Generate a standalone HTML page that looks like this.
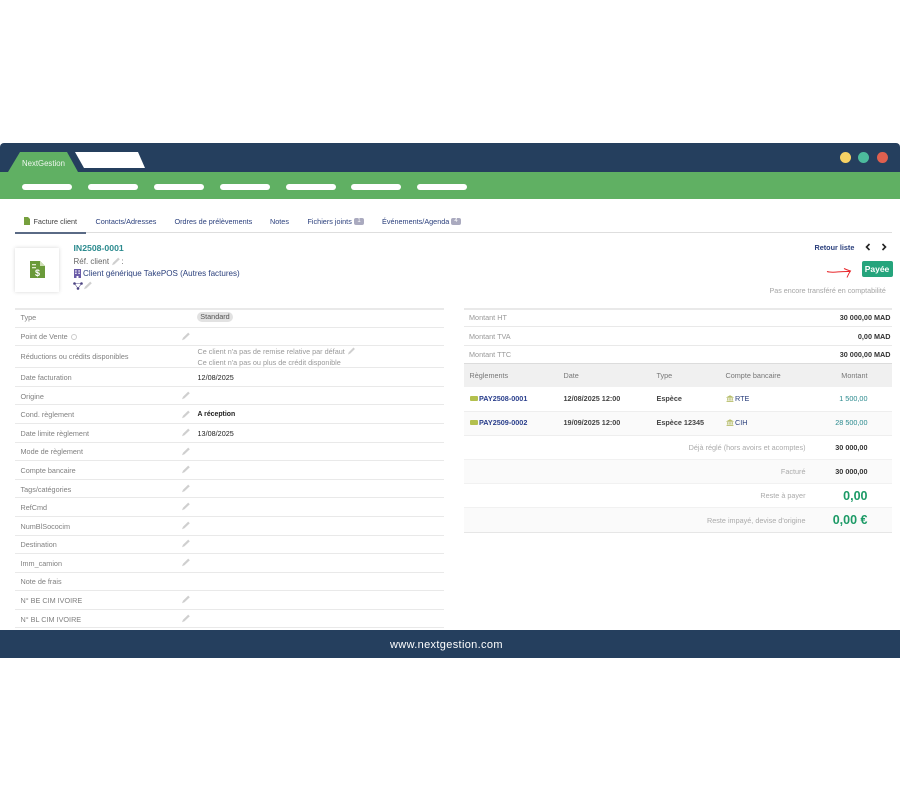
<!DOCTYPE html>
<html lang="fr"><head><meta charset="utf-8"><title>NextGestion</title>
<style>
html,body{margin:0;padding:0;background:#fff}
#p{position:relative;width:900px;height:800px;overflow:hidden;font-family:"Liberation Sans",sans-serif;font-size:7.25px;color:#333;filter:blur(.35px)}
#p div,#p span.a,#p svg{position:absolute}
.t{position:absolute;white-space:nowrap;line-height:12px;height:12px;margin-top:.8px}
.l{color:#808080;left:20.5px}
.v{left:197.5px;color:#222}
.b{font-weight:bold}
.r{text-align:right}
.ln{height:1px;background:#e9e9e9}
.pill{height:6.5px;top:183.7px;width:50px;background:#fff;border-radius:4px;position:absolute}
.nav{color:#2a3f7c}
</style></head><body><div id="p">
<svg width="0" height="0" style="position:absolute"><defs>
<symbol id="pen" viewBox="0 0 10 10"><path d="M1 8.3 L2 5.8 L7.2 .6 L8.8 2.2 L3.5 7.3 Z" fill="#cfcfcf"/></symbol>
<symbol id="bank" viewBox="0 0 10 10"><path d="M5 1 L9.5 3.4 V4 H.5 V3.4 Z M1.5 4.5H3V7.5H1.5Z M4.2 4.5H5.8V7.5H4.2Z M7 4.5H8.5V7.5H7Z M.7 8H9.3V9.2H.7Z" fill="#b6bd6a"/></symbol>
</defs></svg>

<!-- header -->
<div style="left:0;top:143px;width:900px;height:29px;background:#253f5e;border-radius:4px 4px 0 0"></div>
<div style="left:0;top:172px;width:900px;height:27px;background:#60b063"></div>
<svg style="left:0;top:150px" width="160" height="24" viewBox="0 0 160 24">
<path d="M8 22 L20 2 H67 L78 22 Z" fill="#60b063"/>
<path d="M75 2 H138 L145 18 H84 Z" fill="#fff"/></svg>
<span class="t" style="left:22px;top:157px;color:#eef7ee;font-size:7.8px">NextGestion</span>
<span class="pill" style="left:22px"></span><span class="pill" style="left:88px"></span><span class="pill" style="left:154px"></span><span class="pill" style="left:220px"></span><span class="pill" style="left:286px"></span><span class="pill" style="left:351px"></span><span class="pill" style="left:417px"></span>
<div style="left:840px;top:152px;width:11px;height:11px;border-radius:50%;background:#f7d264"></div>
<div style="left:858px;top:152px;width:11px;height:11px;border-radius:50%;background:#4cbb9d"></div>
<div style="left:877px;top:152px;width:10.5px;height:11px;border-radius:50%;background:#e0604f"></div>

<!-- tabs -->
<svg style="left:24px;top:217px" width="6" height="8" viewBox="0 0 6 8"><path d="M0 0H4L6 2V8H0Z" fill="#76a03e"/></svg>
<span class="t" style="left:33.5px;top:215px;color:#444">Facture client</span>
<span class="t nav" style="left:95.5px;top:215px">Contacts/Adresses</span>
<span class="t nav" style="left:174.5px;top:215px">Ordres de prélèvements</span>
<span class="t nav" style="left:270px;top:215px">Notes</span>
<span class="t nav" style="left:307.5px;top:215px">Fichiers joints</span>
<div style="left:354px;top:218px;width:10px;height:7px;background:#aaaabf;border-radius:2px;color:#fff;font-size:6px;line-height:7px;text-align:center">1</div>
<span class="t nav" style="left:382px;top:215px">Événements/Agenda</span>
<div style="left:451px;top:218px;width:10px;height:7px;background:#aaaabf;border-radius:2px;color:#fff;font-size:6px;line-height:7px;text-align:center">4</div>
<div style="left:15px;top:232px;width:877px;height:1px;background:#dedede"></div>
<div style="left:15px;top:232px;width:71px;height:1.5px;background:#5a6a85"></div>

<!-- object banner -->
<div style="left:15px;top:248px;width:44px;height:44px;background:#fff;box-shadow:0 0 4px rgba(0,0,0,.16)"></div>
<svg style="left:30px;top:261px" width="15" height="17" viewBox="0 0 15 17"><path d="M0 0H10L15 5V17H0Z" fill="#6a9a3a"/><path d="M10 0L15 5H10Z" fill="#cfe0b5"/><rect x="2" y="3" width="4" height="1.3" fill="#dfe9cc"/><rect x="2" y="6" width="4" height="1.3" fill="#dfe9cc"/><text x="7.5" y="15" font-family="Liberation Sans" font-size="9" font-weight="bold" fill="#fff" text-anchor="middle">$</text></svg>
<span class="t b" style="left:73.5px;top:241.5px;font-size:8.7px;color:#2a8a8e">IN2508-0001</span>
<span class="t" style="left:73.5px;top:255px;font-size:8px;color:#666">Réf. client</span>
<svg style="left:111px;top:257px" width="10" height="10"><use href="#pen"/></svg>
<span class="t" style="left:121.5px;top:255px;font-size:8px;color:#666">:</span>
<svg style="left:74px;top:269px" width="7" height="9" viewBox="0 0 7 9"><path d="M0 0H7V9H4.5V7H2.5V9H0Z" fill="#6a5ba8"/><path d="M1.2 1.2H2.6V2.6H1.2ZM4.4 1.2H5.8V2.6H4.4ZM1.2 3.6H2.6V5H1.2ZM4.4 3.6H5.8V5H4.4Z" fill="#fff"/></svg>
<span class="t" style="left:83px;top:267.5px;font-size:8.07px;color:#2a3f7c">Client générique TakePOS (Autres factures)</span>
<svg style="left:73px;top:282px" width="10" height="8" viewBox="0 0 10 8"><path d="M1.5 1.5L5 6.5L8.5 1.5M1.5 1.5H8.5" stroke="#5a5290" stroke-width=".6" fill="none"/><circle cx="1.5" cy="1.5" r="1.3" fill="#4a4280"/><circle cx="8.5" cy="1.5" r="1.3" fill="#4a4280"/><circle cx="5" cy="6.5" r="1.3" fill="#4a4280"/></svg>
<svg style="left:83px;top:281px" width="10" height="10"><use href="#pen"/></svg>

<!-- right top -->
<span class="t b" style="left:814.5px;top:241px;color:#2a3f7c">Retour liste</span>
<svg style="left:865px;top:243px" width="6" height="8" viewBox="0 0 6 8"><path d="M4.5 1L1.5 4L4.5 7" stroke="#222" stroke-width="1.6" fill="none"/></svg>
<svg style="left:881px;top:243px" width="6" height="8" viewBox="0 0 6 8"><path d="M1.5 1L4.5 4L1.5 7" stroke="#222" stroke-width="1.6" fill="none"/></svg>
<svg style="left:825px;top:266px" width="30" height="14" viewBox="0 0 30 14"><path d="M2 5.5 C8 7.5 14 5 25 5.5 M19 2.5 C22 4 24 4.5 25.5 5 C24 7 23 9 22 11.5" stroke="#e8262a" stroke-width="1" fill="none"/></svg>
<div style="left:861.5px;top:261px;width:31px;height:16px;background:#25a47c;border-radius:2px;color:#fff;font-weight:bold;font-size:8.5px;line-height:16px;text-align:center">Payée</div>
<span class="t" style="left:769.5px;top:284.5px;color:#a5a5a5;font-size:7.15px">Pas encore transféré en comptabilité</span>

<!-- left table -->
<div class="ln" style="left:15px;top:308px;width:429px;height:1.5px"></div>
<div class="ln" style="left:15px;top:326.5px;width:429px"></div>
<div class="ln" style="left:15px;top:345px;width:429px"></div>
<div class="ln" style="left:15px;top:367px;width:429px"></div>
<div class="ln" style="left:15px;top:386px;width:429px"></div>
<div class="ln" style="left:15px;top:404px;width:429px"></div>
<div class="ln" style="left:15px;top:423px;width:429px"></div>
<div class="ln" style="left:15px;top:442px;width:429px"></div>
<div class="ln" style="left:15px;top:460px;width:429px"></div>
<div class="ln" style="left:15px;top:479px;width:429px"></div>
<div class="ln" style="left:15px;top:497px;width:429px"></div>
<div class="ln" style="left:15px;top:516px;width:429px"></div>
<div class="ln" style="left:15px;top:535px;width:429px"></div>
<div class="ln" style="left:15px;top:553px;width:429px"></div>
<div class="ln" style="left:15px;top:572px;width:429px"></div>
<div class="ln" style="left:15px;top:590px;width:429px"></div>
<div class="ln" style="left:15px;top:609px;width:429px"></div>
<div class="ln" style="left:15px;top:627px;width:429px"></div>

<span class="t l" style="top:311px">Type</span>
<div style="left:197px;top:312px;width:36px;height:10px;border-radius:5px;background:#e2e2e2;color:#555;font-size:7.25px;line-height:10px;text-align:center">Standard</div>
<span class="t l" style="top:330px">Point de Vente</span>
<div style="left:71px;top:334px;width:4px;height:4px;border:1px solid #ccc;border-radius:50%"></div>
<span class="t l" style="top:350.5px">Réductions ou crédits disponibles</span>
<span class="t" style="left:197.5px;top:345px;color:#999">Ce client n'a pas de remise relative par défaut</span>
<svg style="left:347px;top:347px" width="9" height="9"><use href="#pen" width="9" height="9"/></svg>
<span class="t" style="left:197.5px;top:356px;color:#999">Ce client n'a pas ou plus de crédit disponible</span>
<span class="t l" style="top:371px">Date facturation</span>
<span class="t v" style="top:371px">12/08/2025</span>
<span class="t l" style="top:390px">Origine</span>
<span class="t l" style="top:408px">Cond. règlement</span>
<span class="t v b" style="top:408px;font-size:6.9px">A réception</span>
<span class="t l" style="top:427px">Date limite règlement</span>
<span class="t v" style="top:427px">13/08/2025</span>
<span class="t l" style="top:445px">Mode de règlement</span>
<span class="t l" style="top:464px">Compte bancaire</span>
<span class="t l" style="top:483px">Tags/catégories</span>
<span class="t l" style="top:501px">RefCmd</span>
<span class="t l" style="top:520px">NumBlSococim</span>
<span class="t l" style="top:538px">Destination</span>
<span class="t l" style="top:557px">Imm_camion</span>
<span class="t l" style="top:575px">Note de frais</span>
<span class="t l" style="top:594px">N° BE CIM IVOIRE</span>
<span class="t l" style="top:613px">N° BL CIM IVOIRE</span>
<svg style="left:180.5px;top:332px" width="10" height="10"><use href="#pen"/></svg>
<svg style="left:180.5px;top:391px" width="10" height="10"><use href="#pen"/></svg>
<svg style="left:180.5px;top:410px" width="10" height="10"><use href="#pen"/></svg>
<svg style="left:180.5px;top:428px" width="10" height="10"><use href="#pen"/></svg>
<svg style="left:180.5px;top:447px" width="10" height="10"><use href="#pen"/></svg>
<svg style="left:180.5px;top:465px" width="10" height="10"><use href="#pen"/></svg>
<svg style="left:180.5px;top:484px" width="10" height="10"><use href="#pen"/></svg>
<svg style="left:180.5px;top:502px" width="10" height="10"><use href="#pen"/></svg>
<svg style="left:180.5px;top:521px" width="10" height="10"><use href="#pen"/></svg>
<svg style="left:180.5px;top:539px" width="10" height="10"><use href="#pen"/></svg>
<svg style="left:180.5px;top:558px" width="10" height="10"><use href="#pen"/></svg>
<svg style="left:180.5px;top:595px" width="10" height="10"><use href="#pen"/></svg>
<svg style="left:180.5px;top:614px" width="10" height="10"><use href="#pen"/></svg>

<!-- right table -->
<div class="ln" style="left:464px;top:308px;width:428px;height:1.5px"></div>
<div class="ln" style="left:464px;top:326px;width:428px"></div>
<div class="ln" style="left:464px;top:345px;width:428px"></div>
<span class="t" style="left:469px;top:311px;color:#999">Montant HT</span>
<span class="t" style="left:469px;top:330px;color:#999">Montant TVA</span>
<span class="t" style="left:469px;top:348.5px;color:#999">Montant TTC</span>
<span class="t b r" style="right:9.5px;top:311px;color:#333">30 000,00 MAD</span>
<span class="t b r" style="right:9.5px;top:330px;color:#333">0,00 MAD</span>
<span class="t b r" style="right:9.5px;top:348.5px;color:#333">30 000,00 MAD</span>

<div style="left:464px;top:363px;width:428px;height:24px;background:#f0f0f0;border-top:1px solid #dcdcdc;box-sizing:border-box"></div>
<span class="t" style="left:469.5px;top:369px;color:#777">Règlements</span>
<span class="t" style="left:563.5px;top:369px;color:#777">Date</span>
<span class="t" style="left:656.5px;top:369px;color:#777">Type</span>
<span class="t" style="left:725.5px;top:369px;color:#777">Compte bancaire</span>
<span class="t r" style="right:32.5px;top:369px;color:#777">Montant</span>

<div style="left:464px;top:411px;width:428px;height:24px;background:#fafafa"></div>
<div class="ln" style="left:464px;top:410.5px;width:428px;background:#eee"></div>
<div class="ln" style="left:464px;top:434.5px;width:428px;background:#eee"></div>

<div style="left:470px;top:395.5px;width:8px;height:5.5px;background:#b3c04e;border-radius:1px"></div>
<span class="t" style="left:479px;top:392px;color:#2a3f8c;font-weight:bold">PAY2508-0001</span>
<span class="t" style="left:563.5px;top:392px;color:#444;font-weight:bold">12/08/2025 12:00</span>
<span class="t" style="left:656.5px;top:392px;color:#444;font-weight:bold">Espèce</span>
<svg style="left:725.5px;top:393.5px" width="8" height="9"><use href="#bank" width="8" height="9"/></svg>
<span class="t" style="left:735px;top:392px;color:#2a3f7c">RTE</span>
<span class="t r" style="right:32.5px;top:392px;color:#2a8a8e">1 500,00</span>

<div style="left:470px;top:419.5px;width:8px;height:5.5px;background:#b3c04e;border-radius:1px"></div>
<span class="t" style="left:479px;top:416px;color:#2a3f8c;font-weight:bold">PAY2509-0002</span>
<span class="t" style="left:563.5px;top:416px;color:#444;font-weight:bold">19/09/2025 12:00</span>
<span class="t" style="left:656.5px;top:416px;color:#444;font-weight:bold">Espèce 12345</span>
<svg style="left:725.5px;top:417.5px" width="8" height="9"><use href="#bank" width="8" height="9"/></svg>
<span class="t" style="left:735px;top:416px;color:#2a3f7c">CIH</span>
<span class="t r" style="right:32.5px;top:416px;color:#2a8a8e">28 500,00</span>

<div style="left:464px;top:459px;width:428px;height:24px;background:#fafafa"></div>
<div style="left:464px;top:507.5px;width:428px;height:24px;background:#fafafa"></div>
<div class="ln" style="left:464px;top:459px;width:428px;background:#f1f1f1"></div>
<div class="ln" style="left:464px;top:483px;width:428px;background:#f1f1f1"></div>
<div class="ln" style="left:464px;top:507px;width:428px;background:#f1f1f1"></div>
<div class="ln" style="left:464px;top:532px;width:428px;background:#e6e6e6"></div>
<span class="t r" style="right:94.5px;top:441px;color:#aaa">Déjà réglé (hors avoirs et acomptes)</span>
<span class="t r" style="right:94.5px;top:465px;color:#aaa">Facturé</span>
<span class="t r" style="right:94.5px;top:489.5px;color:#aaa">Reste à payer</span>
<span class="t r" style="right:94.5px;top:514px;color:#aaa">Reste impayé, devise d'origine</span>
<span class="t b r" style="right:32.5px;top:441px;color:#333">30 000,00</span>
<span class="t b r" style="right:32.5px;top:465px;color:#333">30 000,00</span>
<span class="t b r" style="right:32.5px;top:489.5px;color:#1c9a66;font-size:12.5px;margin-top:0">0,00</span>
<span class="t b r" style="right:32.5px;top:513.5px;color:#1c9a66;font-size:12.5px;margin-top:0">0,00 €</span>

<!-- footer -->
<div style="left:0;top:630px;width:900px;height:27.5px;background:#253f5e"></div>
<span class="t" style="left:390px;top:638.5px;color:#fff;font-size:11px;letter-spacing:.34px">www.nextgestion.com</span>
</div></body></html>
